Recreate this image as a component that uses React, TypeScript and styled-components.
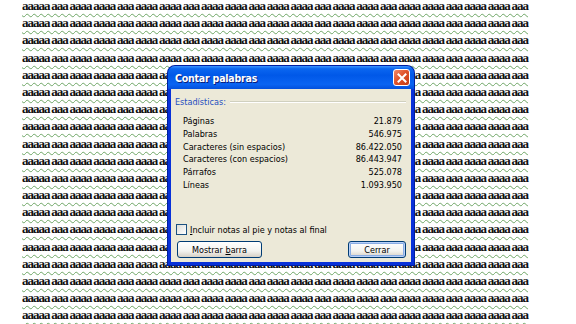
import styled, { createGlobalStyle } from "styled-components";

const GlobalStyle = createGlobalStyle`
  html, body {
    margin: 0;
    padding: 0;
    background: #ffffff;
    overflow: hidden;
  }
`;

const LINE = "aaaaa aaa aaaa aaaa aaa aaaa aaaa aaa aaaa aaaa aaa aaaa aaaa aaa aaaa aaaa aaa aaaa aaaa aaa aaaa aaaa aaa";

const stats = [
  ["Páginas", "21.879"],
  ["Palabras", "546.975"],
  ["Caracteres (sin espacios)", "86.422.050"],
  ["Caracteres (con espacios)", "86.443.947"],
  ["Párrafos", "525.078"],
  ["Líneas", "1.093.950"],
];

export default function App() {
  return (
    <Page>
      <GlobalStyle />
      <Document>
        {Array.from({ length: 19 }).map((_, i) => (
          <TextLine key={i}>
            <Words>{LINE}</Words>
          </TextLine>
        ))}
      </Document>

      <Dialog>
        <TitleBar>
          <Title>Contar palabras</Title>
          <CloseButton>
            <svg width="10" height="10" viewBox="0 0 10 10">
              <path d="M1.5 1.5 L8.5 8.5 M8.5 1.5 L1.5 8.5" stroke="#fff" strokeWidth="2" strokeLinecap="square" />
            </svg>
          </CloseButton>
        </TitleBar>
        <Body>
          <GroupHeader>
            <GroupLabel>Estadísticas:</GroupLabel>
            <GroupRule />
          </GroupHeader>
          <StatList>
            {stats.map(([label, value]) => (
              <StatRow key={label}>
                <span>{label}</span>
                <span>{value}</span>
              </StatRow>
            ))}
          </StatList>
          <Spacer />
          <CheckRow>
            <CheckBox />
            <span>
              <u>I</u>ncluir notas al pie y notas al final
            </span>
          </CheckRow>
          <ButtonRow>
            <Button $width={85}>
              <span>
                Mostrar <u>b</u>arra
              </span>
            </Button>
            <Button $width={58} $default>
              <span>Cerrar</span>
            </Button>
          </ButtonRow>
        </Body>
      </Dialog>
    </Page>
  );
}

const Page = styled.div`
  position: relative;
  width: 576px;
  height: 324px;
  overflow: hidden;
  background: #fff;
`;

const Document = styled.div`
  display: flex;
  flex-direction: column;
  margin-left: 22px;
  width: 540px;
`;

const TextLine = styled.div`
  width: 540px;
  height: 17.2px;
  flex-shrink: 0;
  overflow-x: clip;
  overflow-y: visible;
  white-space: nowrap;
  line-height: 9px;
`;

const Words = styled.span`
  font-family: "Liberation Serif", serif;
  font-weight: bold;
  font-size: 13px;
  letter-spacing: -1px;
  word-spacing: -0.5px;
  color: #111;
  text-decoration-line: underline;
  text-decoration-style: wavy;
  text-decoration-color: #6ea665;
  text-decoration-thickness: 1px;
  text-underline-offset: 3px;
`;

const Dialog = styled.div`
  position: absolute;
  left: 168px;
  top: 66px;
  width: 246px;
  height: 199px;
  box-sizing: border-box;
  display: flex;
  flex-direction: column;
  background: #0831d9;
  border-radius: 7px 7px 0 0;
  padding: 0 3px 3px;
  box-shadow: 0 0 0 1px #001ea0;
`;

const TitleBar = styled.div`
  height: 23px;
  margin: 0 -3px;
  padding: 0 4px 0 7px;
  display: flex;
  align-items: center;
  justify-content: space-between;
  border-radius: 7px 7px 0 0;
  background: linear-gradient(
    to bottom,
    #3d95ff 0%,
    #0a66f0 12%,
    #0058e8 40%,
    #0a64f2 80%,
    #0350dc 100%
  );
`;

const Title = styled.span`
  font-family: "DejaVu Sans Condensed", "DejaVu Sans", sans-serif;
  font-stretch: condensed;
  font-weight: bold;
  font-size: 10.5px;
  letter-spacing: -0.2px;
  color: #fff;
  text-shadow: 1px 1px 0 #0a1e7a;
`;

const CloseButton = styled.div`
  width: 17px;
  height: 17px;
  box-sizing: border-box;
  border: 1px solid #fff;
  border-radius: 3px;
  background: linear-gradient(135deg, #f08a6a 0%, #e0542c 45%, #c33a13 100%);
  display: flex;
  align-items: center;
  justify-content: center;
`;

const Body = styled.div`
  flex: 1;
  background: #ece9d8;
  display: flex;
  flex-direction: column;
  padding: 7px 5px 4px 5px;
  font-family: "DejaVu Sans Condensed", "DejaVu Sans", sans-serif;
  font-stretch: condensed;
  font-size: 9px;
  color: #000;
`;

const GroupHeader = styled.div`
  display: flex;
  align-items: center;
  gap: 4px;
  height: 12px;
  margin-left: -1px;
`;

const GroupLabel = styled.span`
  color: #1f4fc0;
`;

const GroupRule = styled.div`
  flex: 1;
  height: 1px;
  background: #d0d0bf;
  border-bottom: 1px solid #fff;
`;

const StatList = styled.div`
  display: flex;
  flex-direction: column;
  padding: 7px 4px 0 7px;
`;

const StatRow = styled.div`
  display: flex;
  justify-content: space-between;
  height: 12.8px;
  line-height: 12.8px;
`;

const Spacer = styled.div`
  flex: 1;
`;

const CheckRow = styled.div`
  display: flex;
  align-items: center;
  gap: 3px;
  height: 13px;
  margin-bottom: 5px;
`;

const CheckBox = styled.div`
  width: 11px;
  height: 11px;
  box-sizing: border-box;
  border: 1px solid #1c5180;
  background: linear-gradient(135deg, #dcdcd7, #ffffff);
`;

const ButtonRow = styled.div`
  display: flex;
  justify-content: space-between;
  padding: 0 0 0 1px;
`;

const Button = styled.div<{ $width: number; $default?: boolean }>`
  width: ${(p) => p.$width}px;
  height: 17px;
  box-sizing: border-box;
  border: 1px solid #003c74;
  border-radius: 3px;
  background: linear-gradient(to bottom, #ffffff 0%, #f3f3ef 60%, #d6d0c5 100%);
  display: flex;
  align-items: center;
  justify-content: center;
  box-shadow: ${(p) =>
    p.$default ? "inset 0 0 0 1px #b8d0f8, inset 0 0 0 2px #89ade4" : "none"};
`;
